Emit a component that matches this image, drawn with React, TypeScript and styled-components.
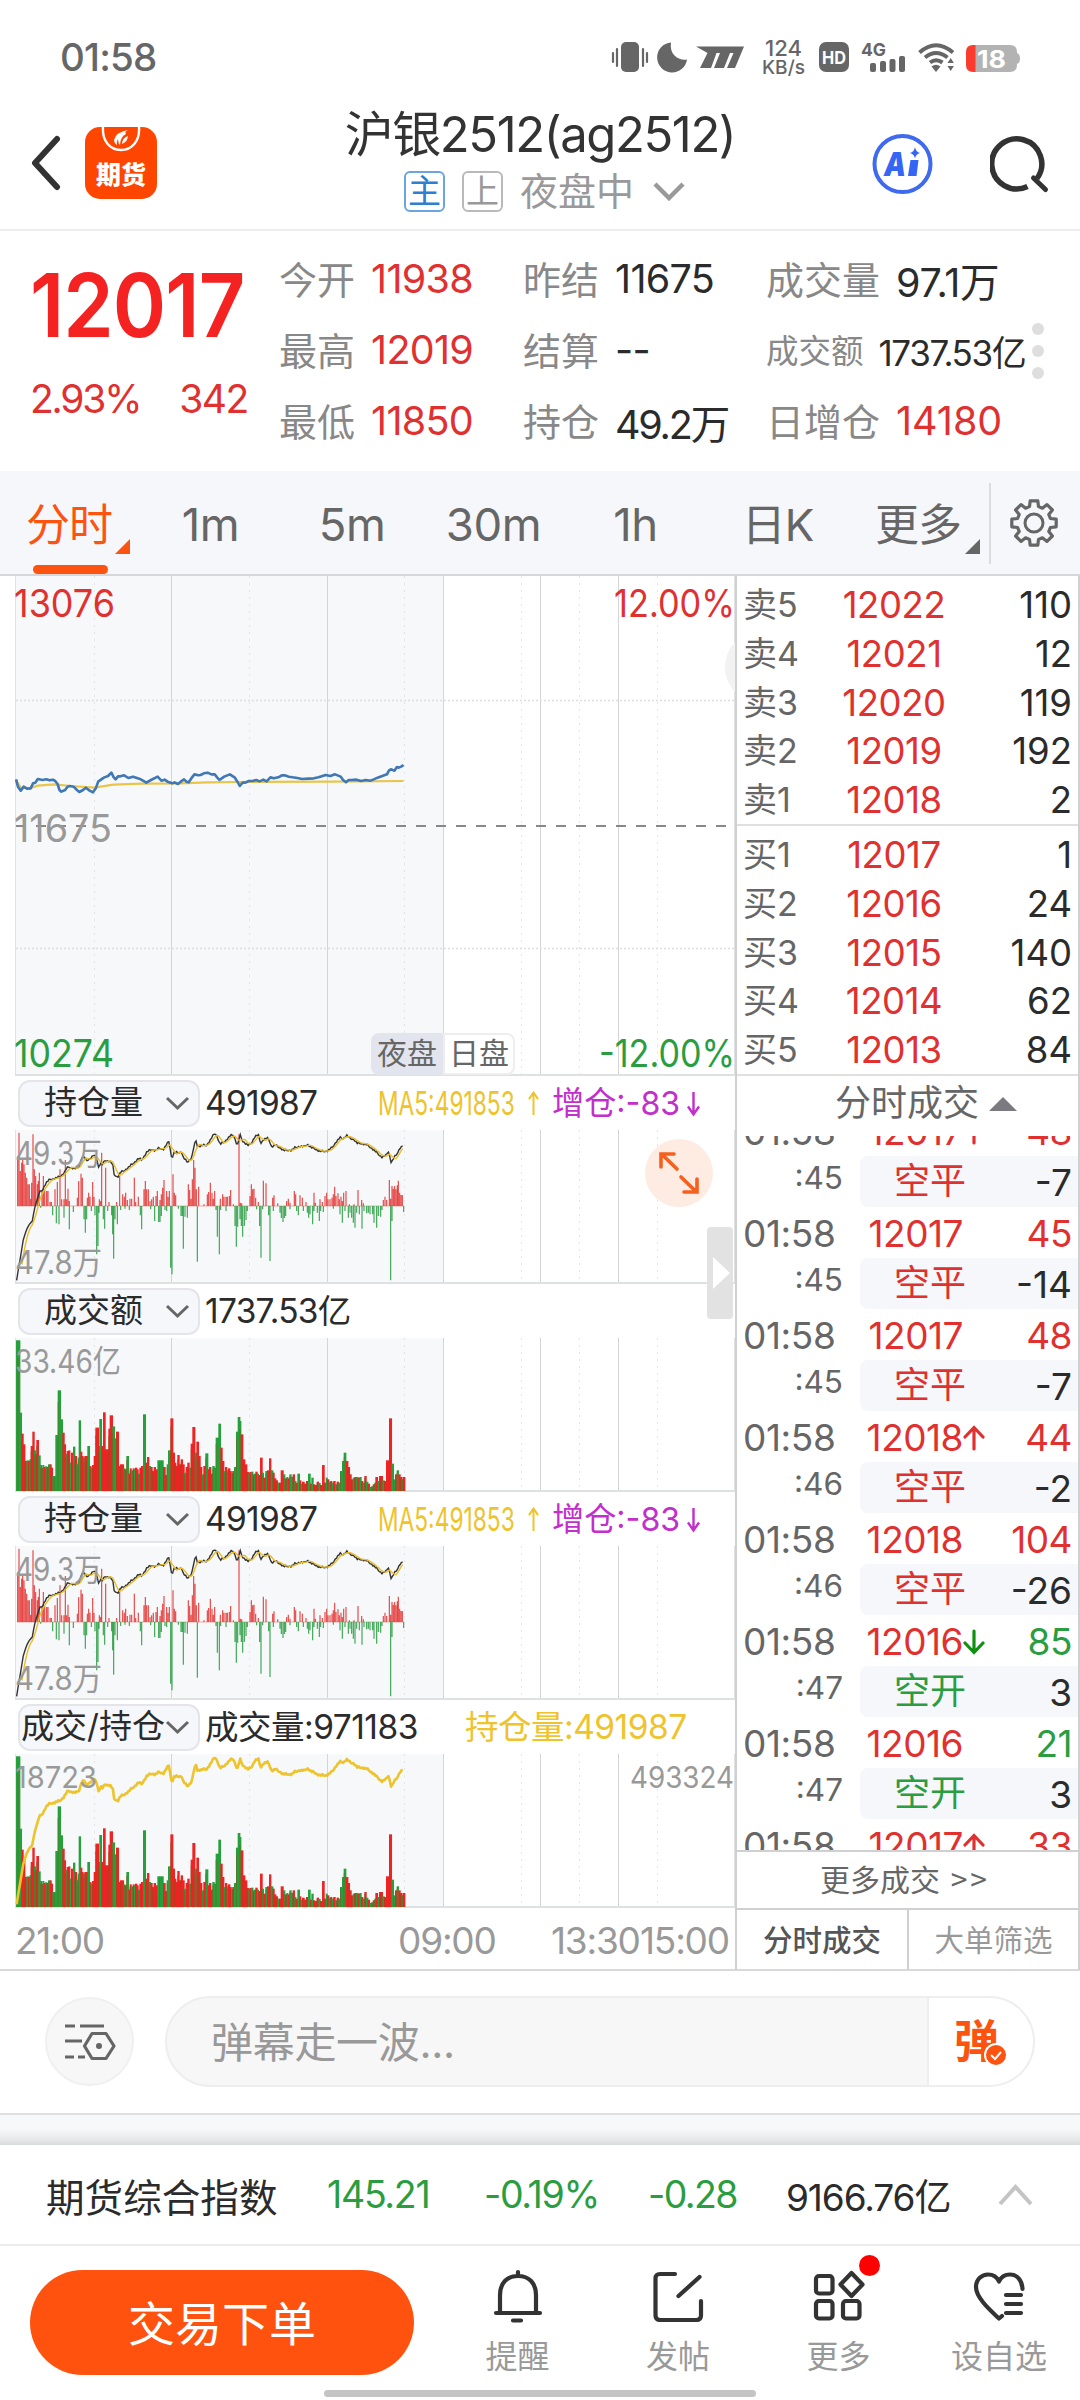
import React from 'react';
import styled, { createGlobalStyle } from 'styled-components';

const RED = '#e03030';
const GREEN = '#2a9d41';
const GOLD = '#eec32c';
const ORANGE = '#fc5310';
const PURPLE = '#c22fcb';

const Global = createGlobalStyle`
  * { box-sizing: border-box; }
  body { margin: 0; background: #fff; }
`;

const Screen = styled.div`
  width: 1080px;
  height: 2400px;
  display: flex;
  flex-direction: column;
  overflow: hidden;
  background: #fff;
  color: #2b2b2b;
  font-family: Inter, 'Noto Sans CJK SC', sans-serif;
  white-space: nowrap;
`;

const Txt = styled.span<{ $s: number; $c?: string; $ls?: number; $w?: number }>`
  font-size: ${p => p.$s}px;
  color: ${p => p.$c || '#2b2b2b'};
  letter-spacing: ${p => p.$ls || 0}px;
  font-weight: ${p => p.$w || 400};
`;

/* Status bar */
const StatusBar = styled.header`
  height: 100px;
  padding: 14px 60px 0 60px;
  display: flex;
  align-items: center;
  justify-content: space-between;
  line-height: 86px;
`;

/* Title bar */
const TitleBar = styled.div`
  height: 131px;
  border-bottom: 2px solid #ededed;
  display: grid;
  grid-template-columns: 170px 1fr 170px;
`;
const TitleLeft = styled.div`
  display: flex;
  align-items: center;
  padding: 0 0 4px 30px;
  gap: 24px;
`;
const AppBadge = styled.div`
  width: 72px;
  height: 72px;
  border-radius: 15px;
  background: #ff4600;
  display: flex;
  flex-direction: column;
  align-items: center;
  overflow: hidden;
`;
const AppBadgeName = styled.div`
  font: 900 25px/26px 'Noto Sans CJK SC', sans-serif;
  color: #fff;
  margin-top: 6px;
`;
const TitleMid = styled.div`
  display: flex;
  flex-direction: column;
  align-items: center;
`;
const Name = styled.div`
  height: 68px;
  line-height: 70px;
  font-size: 49px;
  letter-spacing: -1.4px;
  color: #333;
`;
const SubName = styled.div`
  display: flex;
  align-items: center;
  height: 46px;
  margin-left: 9px;
  line-height: 42px;
`;
const Mark = styled.span<{ $c: string; $b: string }>`
  width: 41px;
  height: 41px;
  border: 2px solid ${p => p.$b};
  border-radius: 6px;
  color: ${p => p.$c};
  font-size: 33px;
  line-height: 36px;
  text-align: center;
  margin-right: 17px;
`;
const SubChevron = styled.span`
  display: flex;
  margin-left: 19px;
`;
const TitleRight = styled.div`
  display: flex;
  align-items: center;
  gap: 56px;
  margin-left: -38px;
  padding-bottom: 2px;
`;

/* Quote */
const Quote = styled.section`
  height: 240px;
  display: grid;
  grid-template-columns: 279px 244px 243px 1fr;
  padding-top: 13px;
`;
const Last = styled.div`
  padding: 18px 0 0 30px;
`;
const LastPrice = styled.div`
  font-size: 88px;
  line-height: 86px;
  font-weight: 600;
  color: #f52222;
  transform: scaleX(0.92);
  transform-origin: left;
  letter-spacing: -1px;
`;
const Change = styled.div`
  display: flex;
  justify-content: space-between;
  width: 218px;
  margin-top: 28px;
  line-height: 46px;
`;
const Facts = styled.div`
  display: flex;
  flex-direction: column;
`;
const Fact = styled.div<{ $gap: number }>`
  display: flex;
  align-items: center;
  gap: ${p => p.$gap}px;
  height: 71px;
  padding-bottom: 1px;
`;
const FactLabel = styled.span<{ $small: boolean }>`
  font-size: ${p => (p.$small ? 32.5 : 38)}px;
  color: #888;
  margin-top: -3px;
`;
const FactsWrap = styled.div`
  position: relative;
`;
const Dots = styled.div`
  position: absolute;
  right: 36px;
  top: 79px;
  display: grid;
  gap: 10px;
  i { width: 12px; height: 12px; border-radius: 6px; background: #dedede; }
`;

/* Period tabs */
const Tabs = styled.nav`
  height: 105px;
  background: #f6f7fa;
  border-bottom: 2px solid #d6d7d9;
  display: grid;
  grid-template-columns: 141px 142px 141px 142px 142px 142px 139px 1fr;
`;
const Tab = styled.div<{ $on?: boolean; $cjk?: boolean }>`
  display: flex;
  flex-direction: column;
  align-items: center;
  font-size: ${p => (p.$cjk ? 44 : 45.5)}px;
  letter-spacing: ${p => (p.$cjk ? -1 : -0.4)}px;
  line-height: 108px;
  padding-right: 3px;
  color: ${p => (p.$on ? ORANGE : '#666')};
  position: relative;
`;
const Underline = styled.i`
  position: absolute;
  left: 33px;
  bottom: 5px;
  width: 75px;
  height: 9px;
  border-radius: 5px;
  background: ${ORANGE};
`;
const Corner = styled.i<{ $c: string; $l: number }>`
  position: absolute;
  left: ${p => p.$l}px;
  top: 68px;
  border-left: 15px solid transparent;
  border-bottom: 15px solid ${p => p.$c};
`;
const GearCell = styled.div`
  height: 81px;
  margin-top: 12px;
  border-left: 2px solid #dcdde0;
  display: flex;
  align-items: center;
  justify-content: center;
  padding: 0 3px 2px 0;
`;

/* Main area */
const Main = styled.main`
  height: 1395px;
  display: grid;
  grid-template-columns: 735px 345px;
  border-bottom: 2px solid #d9d9d9;
`;
const Charts = styled.div`
  position: relative;
  overflow: hidden;
  display: flex;
  flex-direction: column;
`;
const ChartSvg = styled.svg`
  display: block;
  flex: none;
  font-family: Inter, 'Noto Sans CJK SC', sans-serif;
`;
const IndHead = styled.div<{ $cols: string }>`
  height: 54px;
  display: grid;
  grid-template-columns: 187px ${p => p.$cols};
  padding-left: 18px;
  align-items: center;
  line-height: 48px;
`;
const Select = styled.div`
  width: 182px;
  height: 47px;
  border: 2px solid #e3e5ea;
  border-radius: 12px;
  background: #f6f7fa;
  display: flex;
  align-items: center;
  justify-content: flex-end;
  font-size: 33px;
  line-height: 40px;
  padding-right: 8px;
`;
const SelectName = styled.span<{ $tight?: boolean }>`
  margin: -2px ${p => (p.$tight ? 0 : 22)}px 0 0;
`;
const Inline = styled.div`
  display: flex;
  align-items: center;
`;
const Narrow = styled.span<{ $k: number; $w: number; $c: string }>`
  display: inline-block;
  width: ${p => p.$w}px;
  font-size: 33px;
  color: ${p => p.$c};
  transform: scaleX(${p => p.$k});
  transform-origin: left;
`;
const SessionTags = styled.div`
  position: absolute;
  left: 371px;
  top: 457px;
  display: flex;
`;
const SessionTag = styled.div<{ $night?: boolean }>`
  width: 72px;
  height: 42px;
  font-size: 30px;
  line-height: 40px;
  text-align: center;
  color: #666;
  background: ${p => (p.$night ? '#e2e5ed' : '#fff')};
  border-radius: ${p => (p.$night ? '8px 0 0 8px' : '0 8px 8px 0')};
  box-shadow: ${p => (p.$night ? 'none' : 'inset 0 0 0 2px #eeeeee')};
`;
const EdgeCircle = styled.i`
  position: absolute;
  left: 725px;
  top: 55px;
  width: 72px;
  height: 72px;
  border-radius: 36px;
  background: #f2f2f2;
`;
const Expand = styled.div`
  position: absolute;
  left: 645px;
  top: 563px;
  width: 68px;
  height: 68px;
  border-radius: 34px;
  background: #feebe2;
`;
const Handle = styled.div`
  position: absolute;
  left: 707px;
  top: 651px;
  width: 26px;
  height: 92px;
  border-radius: 4px;
  background: #e2e2e2;
  display: flex;
  align-items: center;
  justify-content: center;
  padding-left: 3px;
`;
const Axis = styled.div`
  height: 60px;
  display: grid;
  grid-template-columns: 383px 153px 89px 90px;
  padding-left: 15px;
  line-height: 66px;
  font-size: 37px;
  letter-spacing: -1.2px;
  color: #999;
`;

/* Order book and trades */
const Side = styled.aside`
  border-left: 2px solid #cfd0d2;
  border-right: 2px solid #cfd0d2;
  display: flex;
  flex-direction: column;
`;
const Book = styled.div`
  height: 250px;
  padding: 4px 6px 0 6px;
  border-bottom: 2px solid #e0e0e0;
`;
const BookRow = styled.div`
  height: 48.8px;
  line-height: 50px;
  font-size: 36.5px;
  display: grid;
  grid-template-columns: 80px 142px 1fr;
  span:first-child { color: #666; font-size: 34px; line-height: 49px; }
  span:nth-child(2) { color: ${RED}; text-align: center; letter-spacing: -0.4px; }
  span:last-child { text-align: right; }
`;
const TradesTitle = styled.div`
  height: 60px;
  display: flex;
  align-items: center;
  padding: 0 0 7px 98px;
  font-size: 36px;
  line-height: 50px;
  color: #666;
  gap: 9px;
  svg { margin-top: 3px; }
`;
const Trades = styled.div`
  height: 714px;
  overflow: hidden;
  display: flex;
  flex-direction: column;
`;
const Trade = styled.div`
  flex: none;
  height: 102px;
  &:first-child { margin-top: -31px; }
`;
const TradeTop = styled.div`
  height: 51px;
  display: grid;
  grid-template-columns: 110px 110px 40px 1fr;
  padding: 1px 6px 0 6px;
  line-height: 51px;
  font-size: 37px;
  letter-spacing: -0.5px;
`;
const TradeSub = styled.div`
  height: 51px;
  display: grid;
  grid-template-columns: 106px 17px 1fr;
`;
const Seconds = styled.span`
  font-size: 31.5px;
  line-height: 43px;
  text-align: right;
  color: #666;
`;
const TradeBox = styled.div<{ $c: string }>`
  grid-column: 3;
  height: 51px;
  background: #f6f7fa;
  border-radius: 8px 0 0 8px;
  display: flex;
  justify-content: space-between;
  padding: 0 6px 0 34px;
  line-height: 50px;
  font-size: 36px;
  span:first-child { color: ${p => p.$c}; }
  span:last-child { font-size: 37px; line-height: 54px; }
`;
const Right = styled.span<{ $c: string }>`
  color: ${p => p.$c};
  text-align: right;
`;
const MoreTrades = styled.div`
  height: 60px;
  border-top: 2px solid #cfd0d2;
  border-bottom: 2px solid #cfd0d2;
  color: #666;
  font: 400 30px/53px 'Noto Sans CJK SC', sans-serif;
  word-spacing: 4px;
  padding-right: 5px;
  text-align: center;
  i { font-style: normal; letter-spacing: 3px; }
`;
const SideTabs = styled.div`
  height: 60px;
  display: grid;
  grid-template-columns: 172px 1fr;
  font-size: 29.5px;
  line-height: 60px;
  text-align: center;
  color: #999;
  b { font-weight: 500; color: #555; border-right: 2px solid #cfd0d2; }
`;

/* Barrage input */
const Barrage = styled.section`
  height: 144px;
  border-bottom: 2px solid #e0e0e0;
  display: flex;
  align-items: center;
  padding: 0 45px 1px;
  gap: 31px;
`;
const RoundButton = styled.div`
  width: 89px;
  height: 89px;
  border-radius: 45px;
  border: 2px solid #f0f0f0;
  background: #f7f7f7;
  display: grid;
  place-items: center;
`;
const Input = styled.div`
  width: 870px;
  height: 91px;
  border-radius: 46px;
  border: 2px solid #eeeeee;
  background: #f7f7f7;
  overflow: hidden;
  display: flex;
  font-size: 42px;
  line-height: 90px;
  letter-spacing: -0.3px;
  color: #999;
  padding-left: 44px;
`;
const Send = styled.div`
  margin-left: auto;
  width: 106px;
  background: #fff;
  border-left: 2px solid #eeeeee;
  color: ${ORANGE};
  font: 700 45px/82px 'Noto Sans CJK SC', sans-serif;
  padding-left: 25px;
  position: relative;
  svg { position: absolute; left: 55px; top: 45px; }
`;
const Shade = styled.div`
  height: 30px;
  background: linear-gradient(#f6f8fa 0%, #f6f8fa 45%, #ebecee 75%, #d8d9da 100%);
`;
const IndexBar = styled.section`
  height: 101px;
  border-bottom: 2px solid #ededed;
  display: grid;
  grid-template-columns: 281px 157px 164px 138px 212px 1fr;
  padding-left: 46px;
  align-items: center;
`;

/* Bottom bar */
const Bottom = styled.footer`
  flex: 1;
  display: grid;
  grid-template-columns: 437px 161px 160px 161px 160px;
  position: relative;
`;
const OrderButton = styled.div`
  width: 384px;
  height: 105px;
  margin: 24px 0 0 30px;
  border-radius: 53px;
  background: #ff520e;
  color: #fff;
  font-size: 47px;
  line-height: 107px;
  text-align: center;
`;
const NavItem = styled.div`
  display: flex;
  flex-direction: column;
  align-items: center;
  padding-top: 20px;
  font-size: 32px;
  line-height: 44px;
  color: #999;
  svg { display: block; overflow: visible; margin-bottom: 9px; }
`;
const HomeBar = styled.i`
  position: absolute;
  left: 324px;
  bottom: 3px;
  width: 432px;
  height: 7px;
  border-radius: 4px;
  background: #c4c4c4;
`;

/* Chart data: pairs are sampled in units of one third of a pixel */
const OI: number[] = [50,463,55,430,62,390,70,340,80,310,88,295,97,285,103,250,110,225,118,200,128,190,138,170,150,160,160,158,170,155,180,152,192,140,198,130,205,122,215,125,228,128,238,120,245,95,252,90,258,105,268,98,280,88,290,95,296,125,302,108,308,115,315,103,330,105,338,115,342,145,353,153,360,140,375,132,390,120,405,107,415,97,425,102,440,78,455,70,465,73,478,66,490,70,500,55,507,45,511,70,515,98,522,80,545,78,550,95,562,108,575,95,582,60,588,43,592,60,620,57,632,40,645,20,653,35,660,55,672,48,690,30,700,26,712,58,720,27,728,45,745,58,755,50,765,30,775,27,782,52,792,38,805,37,815,62,825,57,840,65,852,73,875,72,885,65,900,60,912,62,922,54,935,65,945,68,960,76,980,75,995,66,1010,45,1020,35,1030,37,1040,27,1050,37,1062,40,1072,52,1085,52,1098,55,1110,63,1120,70,1130,80,1145,93,1158,88,1165,75,1174,110,1182,95,1190,85,1200,65,1210,58];

const UP: number[] = [53,140,57,220,61,105,65,130,68,138,72,125,76,100,80,85,84,65,88,65,92,22,95,70,99,215,103,110,107,90,112,65,115,75,118,100,126,45,130,90,134,50,140,45,144,45,150,12,154,12,165,50,172,72,180,110,185,20,192,20,196,138,200,20,204,52,208,15,232,25,236,75,243,97,247,85,262,25,266,40,270,28,278,72,282,28,298,20,302,15,305,160,317,115,327,12,350,12,359,100,368,35,373,28,377,40,382,18,390,22,395,22,403,85,407,12,415,28,432,50,436,75,440,50,445,50,450,15,455,20,460,28,468,30,472,45,480,18,484,35,488,55,492,78,500,45,504,28,508,45,519,95,523,40,527,32,565,65,569,48,573,22,577,80,581,138,585,115,589,50,596,58,612,5,622,35,626,42,631,70,636,40,640,22,644,45,661,22,668,35,672,28,678,28,682,28,688,30,692,48,700,5,717,215,721,10,725,8,750,30,754,65,758,50,762,52,767,25,775,12,790,76,798,68,818,25,822,32,833,8,860,15,865,22,870,10,883,45,887,35,900,32,907,25,918,12,942,40,946,10,960,20,967,12,975,30,980,40,984,20,990,20,996,25,1000,35,1004,58,1008,30,1014,38,1018,20,1023,28,1027,15,1031,40,1038,45,1048,5,1062,5,1074,48,1085,18,1090,8,1150,18,1155,28,1160,18,1168,78,1172,22,1176,60,1180,52,1184,60,1188,50,1192,62,1195,76,1199,40,1203,33,1207,33];

const DOWN: number[] = [122,5,158,28,169,52,177,55,192,35,208,70,220,18,252,40,256,80,260,40,274,15,285,28,290,145,294,120,297,20,310,40,314,68,323,15,335,28,338,85,341,158,345,40,352,55,362,12,375,8,388,12,421,28,425,70,452,10,464,45,476,48,480,48,484,30,495,12,500,15,512,185,516,205,535,8,543,30,547,30,550,128,555,32,562,35,592,167,648,12,652,92,658,145,662,12,678,15,705,60,709,122,713,62,720,40,724,60,728,92,733,60,738,42,742,15,770,10,779,60,783,155,788,10,806,28,810,165,820,15,840,20,844,36,849,48,853,36,857,30,870,10,890,15,895,28,910,15,922,20,926,35,930,25,938,55,942,15,952,20,958,45,962,15,970,18,1000,8,1020,25,1027,50,1035,15,1045,35,1050,20,1055,35,1060,50,1065,65,1070,20,1078,25,1086,68,1092,15,1100,22,1105,20,1110,25,1118,25,1122,50,1130,65,1135,30,1142,32,1146,12,1172,223,1176,45,1211,18];

const VOL =
  'g48:452 g53:452 g59:235 r64:172 r69:140 r74:90 g79:92 r84:90 g88:95 r92:135 r97:178 g102:122 r106:110 r109:153 g115:107 g120:78 r124:70 g127:78 r131:72 g135:74 r140:72 g144:80 r149:80 r153:70 g157:45 g161:45 g166:168 g173:302 g181:215 r187:175 r192:140 g196:112 r200:120 r205:122 g209:85 r213:115 g219:133 r224:105 g229:80 g233:100 g236:212 r241:118 r245:105 g249:100 r253:105 r258:105 g262:135 r268:75 g272:70 r276:78 r281:105 r286:190 r291:190 r295:135 g298:216 r304:135 r309:236 r315:125 r320:125 r325:187 r329:227 g337:194 g343:158 r348:178 r355:75 r360:80 r365:80 g370:68 r374:65 g379:105 r385:52 r389:68 g393:62 r398:68 g402:65 r405:70 r410:65 g414:52 r418:70 r423:75 g429:230 r436:85 r441:102 g446:75 r451:72 r456:60 r461:72 r466:65 g472:92 g478:92 g484:92 r489:72 r495:48 g500:80 g504:122 r511:218 r518:115 r523:85 r527:75 r532:108 r537:80 r542:95 r547:80 g552:55 r557:72 r562:85 g567:70 r572:142 r577:192 g584:115 r589:148 r595:105 r600:72 g605:50 r610:75 g616:113 r623:65 r627:72 r632:52 g637:75 g642:70 g647:160 g655:202 r661:130 r666:90 g671:60 r675:72 g680:62 r684:68 r689:60 g693:55 r697:60 g702:72 g708:178 g713:222 g719:210 r722:170 r728:95 r734:80 r740:57 g745:55 r749:57 g753:58 r758:50 g762:52 r766:58 g771:52 r775:48 r780:100 g786:55 r790:40 g796:60 r801:62 r807:98 g812:62 r818:55 r822:38 r827:32 g832:25 r837:25 r842:62 g849:50 r854:38 g859:42 r863:38 g868:50 g873:42 r878:50 g883:30 r887:25 g892:52 r898:32 g902:22 r906:28 r912:22 r918:30 g924:52 r930:22 g934:40 r939:20 r944:18 r950:28 g955:24 r960:18 r966:78 r972:25 g977:40 r981:35 g986:28 r991:30 g995:25 r1000:30 g1005:20 r1010:28 g1015:25 g1020:60 g1026:90 g1031:115 r1037:90 r1043:72 r1048:50 r1053:35 g1058:40 r1063:42 g1068:42 r1073:40 g1078:42 r1083:30 g1088:25 r1093:45 g1098:28 r1103:22 g1108:12 g1113:14 r1118:20 g1123:25 r1126:42 g1132:30 r1137:45 r1142:45 g1147:32 r1152:30 r1158:92 r1167:218 g1174:82 g1180:35 r1185:50 g1190:62 r1195:50 r1200:42 g1205:35 r1208:42';
const volumes = VOL.split(' ').map(v => {
  const [x, h] = v.slice(1).split(':').map(Number);
  return { x, h, c: v[0] === 'g' ? '#25a03c' : '#ee2323' };
});

const PRICE = '34,658 38,680 44,692 50,680 57,686 65,685 70,670 75,668 80,657 90,660 98,658 105,661 112,659 117,663 122,672 126,690 130,695 138,690 143,680 148,678 156,680 163,690 168,696 176,690 182,683 190,692 197,697 203,685 208,665 220,653 229,648 236,638 241,652 245,658 250,649 255,649 263,646 272,654 282,650 295,656 303,662 310,668 320,660 334,650 342,662 349,659 355,665 365,670 370,667 377,672 383,665 390,658 395,665 400,667 407,652 412,643 420,646 425,645 432,640 440,638 448,643 455,643 460,652 465,660 475,650 487,643 497,652 503,665 508,678 514,668 520,668 527,663 535,663 543,660 550,664 558,659 565,664 573,652 580,655 590,652 597,646 603,646 612,650 620,652 630,654 640,657 653,656 665,655 675,652 690,645 700,648 710,643 722,650 727,660 733,667 739,660 745,660 755,659 765,663 775,660 785,662 792,658 800,653 810,648 820,643 824,632 828,628 836,632 841,621 845,623 850,620 855,615';
const AVERAGE = '34,660 44,683 65,684 80,677 115,673 150,678 200,683 240,674 300,671 380,670 440,667 500,666 700,665 855,663';

const Grid = ({ h }: { h: number }) => (
  <g shapeRendering="crispEdges">
    <rect x="16" y="0" width="427" height={h} fill="#f6f8fa" />
    {[94, 249.5, 404.5, 521.5, 579.5, 657.5].map(x => (
      <path key={x} d={`M${x} 0V${h}`} stroke="#e3e4e6" strokeWidth="1" strokeDasharray="2 5" />
    ))}
    {[171.5, 327.5, 443.5, 540.5, 618.5].map(x => (
      <path key={x} d={`M${x} 0V${h}`} stroke="#d3d5d8" strokeWidth="1" />
    ))}
    <path d={`M15.5 0V${h}M734.500 0V${h}`} stroke="#e0e1e3" />
    <path d={`M15 ${h - 1}H735`} stroke="#dfe0e2" strokeWidth="2" />
  </g>
);

const Label = ({ x, y, s, c, w, end, t }: { x: number; y: number; s: number; c: string; w: number; end?: boolean; t: string }) => (
  <text x={x} y={y} fontSize={s} fill={c} textAnchor={end ? 'end' : 'start'} textLength={w} lengthAdjust="spacingAndGlyphs">
    {t}
  </text>
);

const toPoints = (pts: number[][]) => pts.map(p => `${p[0] / 3},${p[1] / 3 - 4}`).join(' ');
const oiPoints = OI.reduce<number[][]>((a, v, i) => {
  if (i % 2) a[a.length - 1].push(v);
  else a.push([v]);
  return a;
}, []);
const oiAt = (x: number) => {
  for (let i = 1; i < oiPoints.length; i++) {
    const [x0, y0] = oiPoints[i - 1];
    const [x1, y1] = oiPoints[i];
    if (x <= x1) return y0 + ((Math.max(x, x0) - x0) / (x1 - x0)) * (y1 - y0);
  }
  return oiPoints[oiPoints.length - 1][1];
};
const jagged: number[][] = [];
const averaged: number[][] = [];
for (let x = 50, i = 0; x <= 1210; x += 3.9, i++) {
  jagged.push([x, oiAt(x) + (x < 120 ? 0 : [0, 3, -1, 1, -3, 1, 2][i % 7])]);
  if (x > 62) averaged.push([x, (oiAt(x) + oiAt(x - 4) + oiAt(x - 8) + oiAt(x - 12) + oiAt(x - 16)) / 5]);
}

const bars = (src: number[], up: boolean) => {
  let d = '';
  for (let i = 0; i < src.length; i += 2) d += `M${src[i] / 3} 76V${76 + (up ? -1 : 1) * (src[i + 1] / 3)}`;
  return d;
};

const OpenInterest = () => (
  <ChartSvg width="735" height="154">
    <Grid h={154} />
    <path d="M17 76H404" stroke="#f5a9a9" strokeWidth="1" />
    <path d={bars(UP, true)} stroke="#e64545" strokeWidth="1.15" />
    <path d={bars(DOWN, false)} stroke="#3ba552" strokeWidth="1.15" />
    <polyline points={toPoints(jagged)} fill="none" stroke="#333" strokeWidth="1.4" />
    <polyline points={toPoints(averaged)} fill="none" stroke="#e9bd2b" strokeWidth="1.4" />
    <Label x={15} y={35} s={32} c="#999" w={87} t="49.3万" />
    <Label x={15} y={144} s={32} c="#999" w={87} t="47.8万" />
  </ChartSvg>
);

const VolumeBars = () => (
  <g>
    {volumes.map((v, i) => {
      const next = i + 1 < volumes.length ? volumes[i + 1].x : 1214;
      return <rect key={v.x} x={v.x / 3} y={153 - v.h / 3} width={(next - v.x) / 3 + 0.7} height={v.h / 3} fill={v.c} />;
    })}
    {volumes.map((v, i) =>
      i % 2 ? <rect key={v.x} x={v.x / 3} y={153 - v.h / 3.4} width="0.7" height={v.h / 3.4} fill="#7d5a1c" opacity="0.75" /> : null,
    )}
  </g>
);

const Chevron = ({ w, h, c, s = 3, up }: { w: number; h: number; c: string; s?: number; up?: boolean }) => (
  <svg width={w} height={h}>
    <path
      d={up ? `M2 ${h - 2}L${w / 2} 3L${w - 2} ${h - 2}` : `M2 2L${w / 2} ${h - 3}L${w - 2} 2`}
      fill="none"
      stroke={c}
      strokeWidth={s}
    />
  </svg>
);

const Arrow = ({ w, h, c, s, down, bold }: { w: number; h: number; c: string; s: number; down?: boolean; bold?: boolean }) => (
  <svg width={w} height={h}>
    <g transform={down ? `rotate(180 ${w / 2} ${h / 2})` : undefined} fill="none" stroke={c} strokeWidth={s} strokeLinecap={bold ? 'round' : 'butt'}>
      <path d={`M${w / 2} ${h - 2}V3M2 ${bold ? w / 2 + 1 : w * 0.7}L${w / 2} 2.5L${w - 2} ${bold ? w / 2 + 1 : w * 0.7}`} />
    </g>
  </svg>
);

const OiHeader = () => (
  <IndHead $cols="173px 174px 1fr">
    <Select>
      <SelectName>持仓量</SelectName>
      <Chevron w={25} h={15} c="#666" />
    </Select>
    <Txt $s={33.5} $ls={-0.7}>491987</Txt>
    <Inline>
      <Narrow $k={0.69} $w={149} $c={GOLD}>MA5:491853</Narrow>
      <Arrow w={13} h={27} c={GOLD} s={2} />
    </Inline>
    <Inline>
      <Narrow $k={0.975} $w={134} $c={PURPLE}>增仓:-83</Narrow>
      <Arrow w={15} h={27} c={PURPLE} s={2.4} down />
    </Inline>
  </IndHead>
);

const fact = (label: string, value: string, c: string, gap = 16, ls = -0.7, small = false) => (
  <Fact $gap={gap} key={label}>
    <FactLabel $small={small}>{label}</FactLabel>
    <Txt $s={small ? 35 : 39.5} $c={c} $ls={ls}>{value}</Txt>
  </Fact>
);

const sells = [['卖5', '12022', '110'], ['卖4', '12021', '12'], ['卖3', '12020', '119'], ['卖2', '12019', '192'], ['卖1', '12018', '2']];
const buys = [['买1', '12017', '1'], ['买2', '12016', '24'], ['买3', '12015', '140'], ['买4', '12014', '62'], ['买5', '12013', '84']];
const trades = [
  { p: '12017', a: 'up', v: '48', c: RED, s: ':45', k: '空平', d: '-7' },
  { p: '12017', a: '', v: '45', c: RED, s: ':45', k: '空平', d: '-14' },
  { p: '12017', a: '', v: '48', c: RED, s: ':45', k: '空平', d: '-7' },
  { p: '12018', a: 'up', v: '44', c: RED, s: ':46', k: '空平', d: '-2' },
  { p: '12018', a: '', v: '104', c: RED, s: ':46', k: '空平', d: '-26' },
  { p: '12016', a: 'down', v: '85', c: GREEN, s: ':47', k: '空开', d: '3' },
  { p: '12016', a: '', v: '21', c: GREEN, s: ':47', k: '空开', d: '3' },
  { p: '12017', a: 'up', v: '33', c: RED, s: '', k: '', d: '' },
];

const StatusIcons = () => (
  <svg width="412" height="50" viewBox="608 33 412 50" fontFamily="Inter, sans-serif">
    <g fill="#666">
      <rect x="621" y="43" width="18" height="30" rx="5" />
      <path d="M613 54v9M617 50v17M643 50v17M647 54v9" stroke="#666" strokeWidth="2.2" strokeLinecap="round" />
      <path d="M671 43.5A15 15 0 1 0 687 60.5C679 62 669 56 671 43.5Z" />
      <path d="M696 47.5H744L735 69H727L733.500 54H730L724 69H714L720 54H716.500L711 69H700L707.500 54Z" />
      <rect x="819" y="43" width="30" height="30" rx="7" />
      <rect x="870" y="64" width="6" height="9" rx="2" />
      <rect x="880" y="62" width="6" height="11" rx="2" />
      <rect x="889.500" y="60" width="6" height="13" rx="2" />
      <rect x="899" y="57" width="6" height="16" rx="2" />
      <path d="M931.500 67.500Q936 64 940.500 67.500L936 73Z" />
      <path d="M947.500 64l3.200-5 3.200 5zM947.500 67l3.200 5 3.200-5z" />
    </g>
    <g fill="none" stroke="#666" strokeWidth="4">
      <path d="M919.500 53.500Q936 39 953 53.500" />
      <path d="M925 58.500Q936 49.500 947.500 58.500" />
      <path d="M930 63.500Q936 59 942.500 63.500" />
    </g>
    <g fill="#666">
      <text x="765" y="57" fontSize="22" fontWeight="500" textLength="37" lengthAdjust="spacingAndGlyphs">124</text>
      <text x="762" y="75" fontSize="19" fontWeight="500" textLength="43" lengthAdjust="spacingAndGlyphs">KB/s</text>
      <text x="861" y="57" fontSize="18" fontWeight="700" textLength="25" lengthAdjust="spacingAndGlyphs">4G</text>
      <text x="822" y="65" fontSize="18" fontWeight="700" fill="#fff" textLength="24" lengthAdjust="spacingAndGlyphs">HD</text>
    </g>
    <path d="M973 46H1010Q1017 46 1017 53V54Q1020 55 1020 59.500T1017 65V66Q1017 73 1010 73H973Z" fill="#b3b3b3" />
    <path d="M975.500 46H973Q966 46 966 53V66Q966 73 973 73H975.500Z" fill="#fb3b2d" />
    <text x="977" y="68.500" fontSize="24" fontWeight="700" fill="#fff" textLength="29" lengthAdjust="spacingAndGlyphs">18</text>
  </svg>
);

const gearPath = (() => {
  const pts: string[] = [];
  for (let i = 0; i < 8; i++) {
    const a = (i * Math.PI) / 4 - Math.PI / 2;
    [[-0.27, 17], [-0.17, 22.5], [0.17, 22.5], [0.27, 17]].forEach(([o, r]) => {
      pts.push(`${(25 + Math.cos(a + o) * r).toFixed(1)} ${(25 + Math.sin(a + o) * r).toFixed(1)}`);
    });
  }
  return `M${pts.join('L')}Z`;
})();

export default function App() {
  return (
    <>
      <Global />
      <Screen>
        <StatusBar>
          <Txt $s={38.5} $c="#666" $w={500} $ls={-0.8}>01:58</Txt>
          <StatusIcons />
        </StatusBar>

        <TitleBar>
          <TitleLeft>
            <svg width="31" height="56">
              <path d="M27 4L5 28L27 52" fill="none" stroke="#333" strokeWidth="6" strokeLinecap="round" strokeLinejoin="round" />
            </svg>
            <AppBadge>
              <svg width="44" height="27">
                <path d="M4 0C3 14 11 23 22 23S41 14 40 0" fill="none" stroke="#fff" strokeWidth="2.4" />
                <path d="M15 13Q17 5 29 3Q25 5 27 7Q21 10 21 18Q19 16 19 12Q17 15 18 18Q15 16 15 13ZM23 17Q23 11 29 9Q29 14 23 17Z" fill="#fff" />
              </svg>
              <AppBadgeName>期货</AppBadgeName>
            </AppBadge>
          </TitleLeft>
          <TitleMid>
            <Name>沪银2512(ag2512)</Name>
            <SubName>
              <Mark $c="#2f7fd0" $b="#6ba4e0">主</Mark>
              <Mark $c="#999" $b="#b9b9b9">上</Mark>
              <Txt $s={38} $c="#999">夜盘中</Txt>
              <SubChevron>
                <Chevron w={32} h={19} c="#999" s={4.5} />
              </SubChevron>
            </SubName>
          </TitleMid>
          <TitleRight>
            <svg width="62" height="62">
              <circle cx="30.500" cy="31" r="28" fill="none" stroke="#3f69ee" strokeWidth="4" />
              <text x="12" y="42.500" fontSize="33" fontWeight="900" fontStyle="italic" fill="#3565f5" fontFamily="Inter, sans-serif" textLength="22" lengthAdjust="spacingAndGlyphs">A</text>
              <path d="M38.500 27H46.500L44.500 43H36ZM43 14Q43.800 19 48 20Q43.800 21 43 25.500Q42.200 21 38 20Q42.200 19 43 14Z" fill="#3565f5" />
            </svg>
            <svg width="64" height="62">
              <path d="M39.500 52.400A25 25 0 1 1 49 44.500" transform="translate(-2 1)" fill="none" stroke="#333" strokeWidth="5.500" />
              <path d="M43.500 45L55.500 56.500" fill="none" stroke="#333" strokeWidth="5" strokeLinecap="round" />
            </svg>
          </TitleRight>
        </TitleBar>

        <Quote>
          <Last>
            <LastPrice>12017</LastPrice>
            <Change>
              <Txt $s={39} $c={RED} $ls={-2.2}>2.93%</Txt>
              <Txt $s={39} $c={RED} $ls={-1.4}>342</Txt>
            </Change>
          </Last>
          <Facts>
            {fact('今开', '11938', RED)}
            {fact('最高', '12019', RED)}
            {fact('最低', '11850', RED)}
          </Facts>
          <Facts>
            {fact('昨结', '11675', '#2b2b2b')}
            {fact('结算', '--', '#2b2b2b')}
            {fact('持仓', '49.2万', '#2b2b2b', 16, -2.2)}
          </Facts>
          <FactsWrap>
            {fact('成交量', '97.1万', '#2b2b2b', 16, -0.3)}
            {fact('成交额', '1737.53亿', '#2b2b2b', 15, -1.4, true)}
            {fact('日增仓', '14180', RED, 16, 0)}
            <Dots><i /><i /><i /></Dots>
          </FactsWrap>
        </Quote>

        <Tabs>
          <Tab $on $cjk>分时<Underline /><Corner $c={ORANGE} $l={115} /></Tab>
          <Tab>1m</Tab>
          <Tab>5m</Tab>
          <Tab>30m</Tab>
          <Tab>1h</Tab>
          <Tab $cjk>日K</Tab>
          <Tab $cjk>更多<Corner $c="#666" $l={115} /></Tab>
          <GearCell>
            <svg width="50" height="50">
              <path d={gearPath} fill="none" stroke="#666" strokeWidth="3.200" strokeLinejoin="round" />
              <circle cx="25" cy="25" r="9" fill="none" stroke="#666" strokeWidth="3" />
            </svg>
          </GearCell>
        </Tabs>

        <Main>
          <Charts>
            <ChartSvg width="735" height="500">
              <Grid h={500} />
              <path d="M16 124.500H735M16 372.500H735" stroke="#dcdddf" strokeWidth="1.500" strokeDasharray="2 2" />
              <path d="M16 250H733" stroke="#888" strokeWidth="2" strokeDasharray="10 10" />
              <g transform="translate(0 -16) scale(0.47194 0.33333)" fill="none" strokeWidth="2.600">
                <polyline points={AVERAGE} stroke="#e9c54a" strokeWidth="2.200" vectorEffect="non-scaling-stroke" />
                <polyline points={PRICE} stroke="#3f78b5" vectorEffect="non-scaling-stroke" strokeLinejoin="round" />
              </g>
              <Label x={14} y={41} s={38.500} c={RED} w={101} t="13076" />
              <Label x={735} y={41} s={38.500} c={RED} w={121} end t="12.00%" />
              <Label x={14} y={266} s={38.500} c="#999" w={98} t="11675" />
              <Label x={14} y={491} s={38.500} c={GREEN} w={100} t="10274" />
              <Label x={735} y={491} s={38.500} c={GREEN} w={136} end t="-12.00%" />
            </ChartSvg>
            <OiHeader />
            <OpenInterest />
            <IndHead $cols="1fr">
              <Select>
                <SelectName>成交额</SelectName>
                <Chevron w={25} h={15} c="#666" />
              </Select>
              <Txt $s={33.5} $ls={-0.7}>1737.53亿</Txt>
            </IndHead>
            <ChartSvg width="735" height="154">
              <Grid h={154} />
              <VolumeBars />
              <Label x={15} y={35} s={32} c="#999" w={106} t="33.46亿" />
            </ChartSvg>
            <OiHeader />
            <OpenInterest />
            <IndHead $cols="260px 1fr">
              <Select>
                <SelectName $tight>成交/持仓</SelectName>
                <Chevron w={25} h={15} c="#666" />
              </Select>
              <Txt $s={33.5} $ls={-0.5}>成交量:971183</Txt>
              <Txt $s={33.5} $c={GOLD} $ls={-0.5}>持仓量:491987</Txt>
            </IndHead>
            <ChartSvg width="735" height="154">
              <Grid h={154} />
              <VolumeBars />
              <polyline points={toPoints(jagged)} fill="none" stroke="#eec32c" strokeWidth="2.600" strokeLinejoin="round" />
              <Label x={15} y={34} s={30} c="#999" w={82} t="18723" />
              <Label x={734} y={34} s={30} c="#999" w={104} end t="493324" />
            </ChartSvg>
            <Axis>
              <span>21:00</span>
              <span>09:00</span>
              <span>13:30</span>
              <span>15:00</span>
            </Axis>
            <SessionTags>
              <SessionTag $night>夜盘</SessionTag>
              <SessionTag>日盘</SessionTag>
            </SessionTags>
            <EdgeCircle />
            <Expand>
              <svg width="68" height="68" fill="none" stroke="#f4601f" strokeWidth="3.600" strokeLinecap="round">
                <path d="M32 30L17 15.500M16 28V15H29M36 38L51 52.500M52 40V53H39" />
              </svg>
            </Expand>
            <Handle>
              <svg width="17" height="32">
                <path d="M0 0L17 16L0 32Z" fill="#fff" />
              </svg>
            </Handle>
          </Charts>

          <Side>
            <Book>
              {sells.map(r => (
                <BookRow key={r[0]}><span>{r[0]}</span><span>{r[1]}</span><span>{r[2]}</span></BookRow>
              ))}
            </Book>
            <Book>
              {buys.map(r => (
                <BookRow key={r[0]}><span>{r[0]}</span><span>{r[1]}</span><span>{r[2]}</span></BookRow>
              ))}
            </Book>
            <TradesTitle>
              分时成交
              <svg width="30" height="14"><path d="M1 14L15 0L29 14Z" fill="#7a7a80" /></svg>
            </TradesTitle>
            <Trades>
              {trades.map((t, i) => (
                <Trade key={i}>
                  <TradeTop>
                    <Txt $s={37} $c="#666" $ls={-0.4}>01:58</Txt>
                    <Right $c={RED}>{t.p}</Right>
                    <Inline>
                      {t.a && <Arrow w={22} h={26} c={t.a === 'up' ? RED : '#109010'} s={3.2} down={t.a === 'down'} bold />}
                    </Inline>
                    <Right $c={t.c}>{t.v}</Right>
                  </TradeTop>
                  {t.k && (
                    <TradeSub>
                      <Seconds>{t.s}</Seconds>
                      <TradeBox $c={t.c}><span>{t.k}</span><span>{t.d}</span></TradeBox>
                    </TradeSub>
                  )}
                </Trade>
              ))}
            </Trades>
            <MoreTrades>更多成交 <i>&gt;&gt;</i></MoreTrades>
            <SideTabs><b>分时成交</b><span>大单筛选</span></SideTabs>
          </Side>
        </Main>

        <Barrage>
          <RoundButton>
            <svg width="52" height="40" fill="none" stroke="#666" strokeWidth="3.200">
              <path d="M1 4H11M16 4H40M1 19H18M1 35H10M14 35H21" />
              <path d="M28 11.500H42L50 24L42 36.500H28L20.500 24Z" strokeLinejoin="round" />
              <circle cx="35" cy="24" r="3" fill="#666" stroke="none" />
            </svg>
          </RoundButton>
          <Input>
            弹幕走一波...
            <Send>
              弹
              <svg width="24" height="24">
                <circle cx="12" cy="12" r="11" fill={ORANGE} stroke="#fff" strokeWidth="2" />
                <path d="M7 12L11 16L17 9" fill="none" stroke="#fff" strokeWidth="2" />
              </svg>
            </Send>
          </Input>
        </Barrage>
        <Shade />

        <IndexBar>
          <Txt $s={38.6}>期货综合指数</Txt>
          <Txt $s={37.5} $c={GREEN} $ls={-1.3}>145.21</Txt>
          <Txt $s={37.5} $c={GREEN} $ls={-1.3}>-0.19%</Txt>
          <Txt $s={37.5} $c={GREEN} $ls={-1.6}>-0.28</Txt>
          <Txt $s={37} $ls={-1.1}>9166.76亿</Txt>
          <Chevron w={35} h={22} c="#c4c4c4" s={4} up />
        </IndexBar>

        <Bottom>
          <OrderButton>交易下单</OrderButton>
          <NavItem>
            <svg width="52" height="60" fill="none" stroke="#333" strokeWidth="4.200" strokeLinecap="round">
              <path d="M26 6V10M8 46V29C8 17 15 10 26 10S44 17 44 29V46M4 47H48M21 54.500H29" />
            </svg>
            提醒
          </NavItem>
          <NavItem>
            <svg width="52" height="60" fill="none" stroke="#333" strokeWidth="4.200" strokeLinecap="round">
              <path d="M23 8H8Q3.500 8 3.500 12.500V49.500Q3.500 54 8 54H44.500Q49 54 49 49.500V35M47.500 11L26.500 30" />
            </svg>
            发帖
          </NavItem>
          <NavItem>
            <svg width="52" height="60" fill="none" stroke="#333" strokeWidth="4.200" strokeLinejoin="round">
              <rect x="3" y="10" width="16.500" height="17.500" rx="3" />
              <rect x="3" y="35" width="16.500" height="17.500" rx="3" />
              <rect x="30" y="35" width="16.500" height="17.500" rx="3" />
              <path d="M38.500 7L49.500 18.500L38.500 30L27.500 18.500Z" />
              <circle cx="56.500" cy="-0.500" r="10.500" fill="#f00" stroke="none" />
            </svg>
            更多
          </NavItem>
          <NavItem>
            <svg width="52" height="60" fill="none" stroke="#333" strokeWidth="4.200" strokeLinecap="round" strokeLinejoin="round">
              <path d="M29 50L26 52.500C18 45 3 32 3 21C3 13 9 8.500 15 8.500C20 8.500 24 11 26 15.500C28 11 32 8.500 37 8.500C44 8.500 49 14 49.500 23M33 29H48M33 38H48M33 47H48" />
            </svg>
            设自选
          </NavItem>
          <HomeBar />
        </Bottom>
      </Screen>
    </>
  );
}
